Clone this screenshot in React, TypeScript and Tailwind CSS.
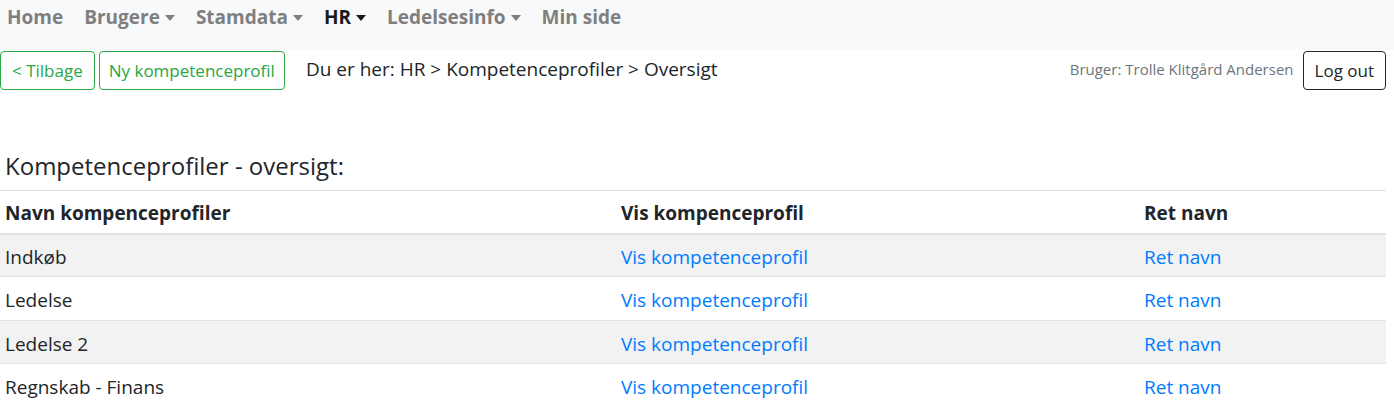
import React from "react";

const Caret = () => (
  <span className="ml-[5px] inline-block align-[3px] border-t-[6px] border-x-[5px] border-x-transparent border-t-current w-0 h-0" />
);

const rows = ["Indkøb", "Ledelse", "Ledelse 2", "Regnskab - Finans"];

export default function App() {
  return (
    <div className="w-[1394px] h-[407px] overflow-hidden bg-white text-[#212529]" style={{ fontFamily: '"Open Sans", "Noto Sans", sans-serif' }}>
      <nav className="h-[50px] bg-[#f8f9fa] flex items-start pt-[4px] pl-[7px] gap-[21px] text-[19px] leading-[27px] font-bold text-[#7f7f7f]">
        <span>Home</span>
        <span>Brugere<Caret /></span>
        <span>Stamdata<Caret /></span>
        <span className="text-[#1a1a1a]">HR<Caret /></span>
        <span>Ledelsesinfo<Caret /></span>
        <span>Min side</span>
      </nav>
      <div className="flex items-start mt-[1px] pr-[8px]">
        <button className="h-[39px] px-[11px] border border-[#28a745] rounded-[4px] text-[#28a745] text-[17px]">&lt; Tilbage</button>
        <button className="ml-[4px] h-[39px] px-[9px] border border-[#28a745] rounded-[4px] text-[#28a745] text-[17px]">Ny kompetenceprofil</button>
        <div className="ml-[21px] h-[36px] flex items-center text-[19px]">Du er her: HR &gt; Kompetenceprofiler &gt; Oversigt</div>
        <div className="ml-auto h-[36px] flex items-center text-[15px] text-[#6c757d]">Bruger: Trolle Klitgård Andersen</div>
        <button className="ml-[9px] h-[39px] px-[11px] border border-[#212529] rounded-[4px] text-[17px]">Log out</button>
      </div>
      <h4 className="mt-[58px] pl-[5px] text-[24px] leading-[36px]">Kompetenceprofiler - oversigt:</h4>
      <table className="mt-[6px] w-[1386px] border-collapse text-[19px]">
        <thead>
          <tr className="border-t border-[#dee2e6] border-b-2">
            <th className="h-[43px] pt-[2px] text-left font-bold pl-[5px] w-[616px]">Navn kompenceprofiler</th>
            <th className="pt-[2px] text-left font-bold pl-[5px] w-[523px]">Vis kompenceprofil</th>
            <th className="pt-[2px] text-left font-bold pl-[5px]">Ret navn</th>
          </tr>
        </thead>
        <tbody>
          {rows.map((r, i) => (
            <tr key={r} className={`border-t border-[#dee2e6] ${i % 2 === 0 ? "bg-[#f2f2f2]" : "bg-white"}`}>
              <td className="h-[43.4px] pt-[4px] pl-[5px]">{r}</td>
              <td className="pt-[4px] pl-[5px] text-[#007bff]">Vis kompetenceprofil</td>
              <td className="pt-[4px] pl-[5px] text-[#007bff]">Ret navn</td>
            </tr>
          ))}
        </tbody>
      </table>
    </div>
  );
}
